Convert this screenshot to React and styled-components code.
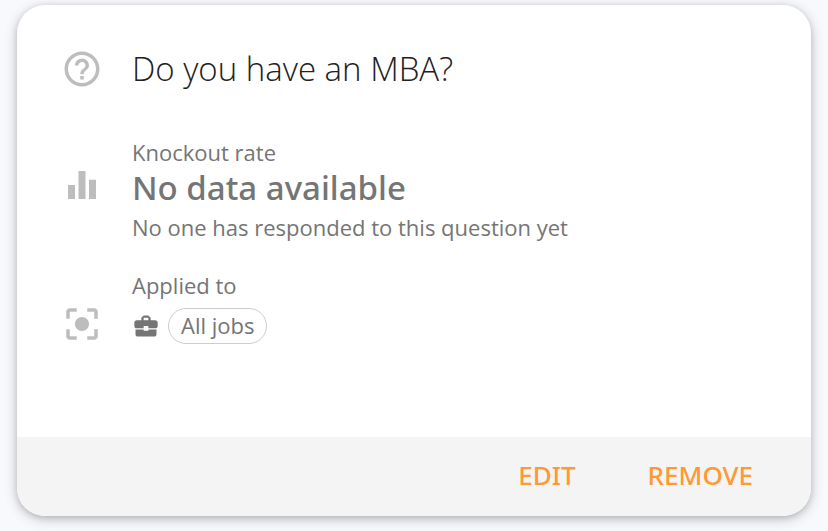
import React from 'react';
import styled, { createGlobalStyle } from 'styled-components';
import { MdHelpOutline, MdEqualizer, MdCenterFocusStrong, MdBusinessCenter } from 'react-icons/md';

const GlobalStyle = createGlobalStyle`
  body {
    margin: 0;
    background: #f8f9fd;
    font-family: 'Open Sans', sans-serif;
    color: #757575;
  }
`;

const Page = styled.main`
  padding: 5px 17px 15px;
`;

const Card = styled.article`
  background: #fff;
  border-radius: 28px;
  overflow: hidden;
  box-shadow: 0 3px 14px rgba(0, 0, 0, 0.2), 0 2px 6px rgba(0, 0, 0, 0.14);
`;

const Content = styled.div`
  padding: 40px 44px 91px;
`;

const Row = styled.section`
  display: grid;
  grid-template-columns: 42px 1fr;
  column-gap: 29px;
  align-items: ${({ $align }) => $align || 'center'};
  margin-bottom: ${({ $gap }) => $gap || 0}px;
`;

const RowIcon = styled.span`
  display: flex;
  justify-content: center;
  padding-bottom: ${({ $lift }) => $lift || 0}px;
  color: #bdbdbd;
  font-size: 44px;
`;

const Title = styled.h1`
  margin: 0;
  font-size: 33px;
  font-weight: 300;
  line-height: 48px;
  color: #212121;
`;

const Label = styled.p`
  margin: 0;
  font-size: 22px;
  line-height: 32px;
`;

const Value = styled.h2`
  margin: 0 0 3px;
  font-family: 'Noto Sans', sans-serif;
  font-size: 33px;
  font-weight: 500;
  line-height: 40px;
`;

const JobList = styled.div`
  display: flex;
  align-items: center;
  gap: 8px;
  min-height: 40px;
  margin-top: 5px;
  font-size: 28px;
`;

const Chip = styled.span`
  padding: 0 12px 2px;
  border: 1px solid #ccc;
  border-radius: 18px;
  font-size: 22px;
  line-height: 32px;
`;

const Actions = styled.footer`
  display: flex;
  justify-content: flex-end;
  gap: 40px;
  padding: 15px 42px 17px;
  background: #f4f4f4;
`;

const Button = styled.button`
  padding: 0 16px;
  border: none;
  background: none;
  color: #ff9933;
  font-family: 'Noto Sans', sans-serif;
  font-size: 26px;
  font-weight: 500;
  line-height: 47px;
  text-transform: uppercase;
  cursor: pointer;
`;

const App = () => (
  <>
    <GlobalStyle />
    <Page>
      <Card>
        <Content>
          <Row $gap={43}>
            <RowIcon><MdHelpOutline /></RowIcon>
            <Title>Do you have an MBA?</Title>
          </Row>
          <Row $gap={26}>
            <RowIcon $lift={10}><MdEqualizer /></RowIcon>
            <div>
              <Label>Knockout rate</Label>
              <Value>No data available</Value>
              <Label>No one has responded to this question yet</Label>
            </div>
          </Row>
          <Row $align="end">
            <RowIcon><MdCenterFocusStrong /></RowIcon>
            <div>
              <Label>Applied to</Label>
              <JobList>
                <MdBusinessCenter />
                <Chip>All jobs</Chip>
              </JobList>
            </div>
          </Row>
        </Content>
        <Actions>
          <Button type="button">Edit</Button>
          <Button type="button">Remove</Button>
        </Actions>
      </Card>
    </Page>
  </>
);

export default App;
